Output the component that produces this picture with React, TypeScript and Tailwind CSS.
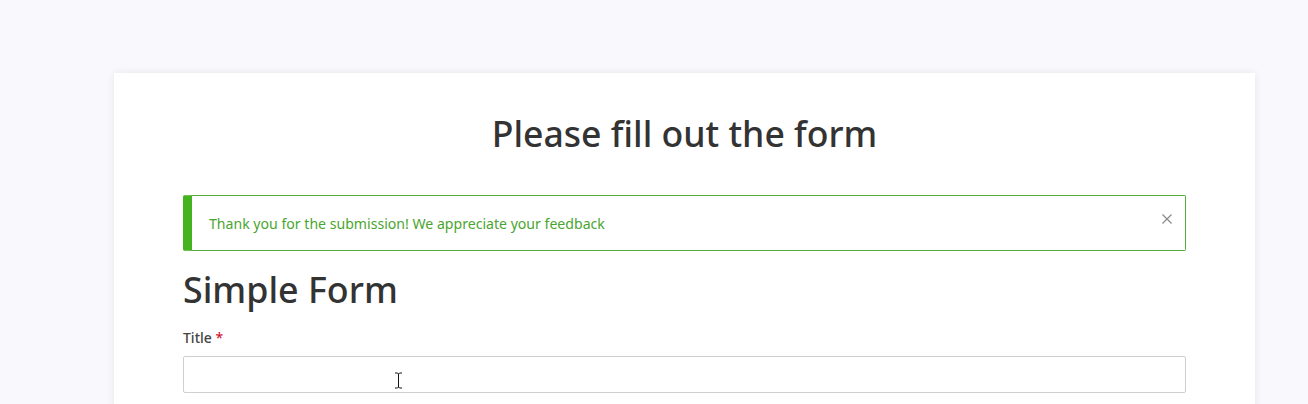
import React from "react";

export default function App() {
  return (
    <div className="min-h-[404px] w-full bg-[#f9f9fd] pt-[73px] overflow-hidden">
      <div
        className="ml-[114px] w-[1141px] h-[340px] bg-white shadow-[0_0_8px_rgba(0,0,0,0.08)] px-[69px] pt-[38px] relative"
        style={{ fontFamily: '"Noto Sans", "Open Sans", sans-serif' }}
      >
        <h1 className="text-center text-[35.6px] leading-[44px] font-medium text-[#333333]">
          Please fill out the form
        </h1>
        <div className="mt-[40px] h-[56px] flex items-center justify-between border border-[#52ad3a] border-l-[9px] border-l-[#45b21f] rounded-[2px] pl-[17px] pr-[12px]">
          <span className="text-[14.1px] text-[#4aa530] mt-[1px]">
            Thank you for the submission! We appreciate your feedback
          </span>
          <svg width="12" height="12" viewBox="0 0 12 12" className="-mt-[9px]">
            <path d="M1.5 1.5 L10.5 10.5 M10.5 1.5 L1.5 10.5" stroke="#8a8a8a" strokeWidth="1.2" />
          </svg>
        </div>
        <h2 className="mt-[15px] text-[35.8px] leading-[46px] font-medium text-[#333333]">
          Simple Form
        </h2>
        <label className="mt-[16px] block text-[14px] leading-[20px] font-medium text-[#444444]">
          Title <span className="font-normal text-[#d0021b]">*</span>
        </label>
        <div className="mt-[8px] h-[37px] border border-[#cfcfd3] rounded-[2px] relative">
          <svg
            width="9"
            height="17"
            viewBox="0 0 9 17"
            className="absolute left-[210px] top-[15px]"
          >
            <path d="M1 1 H3.5 L4.5 2 L5.5 1 H8 M4.5 2 V15 M1 16 H3.5 L4.5 15 L5.5 16 H8" stroke="#111" strokeWidth="1" fill="none" />
          </svg>
        </div>
      </div>
    </div>
  );
}
